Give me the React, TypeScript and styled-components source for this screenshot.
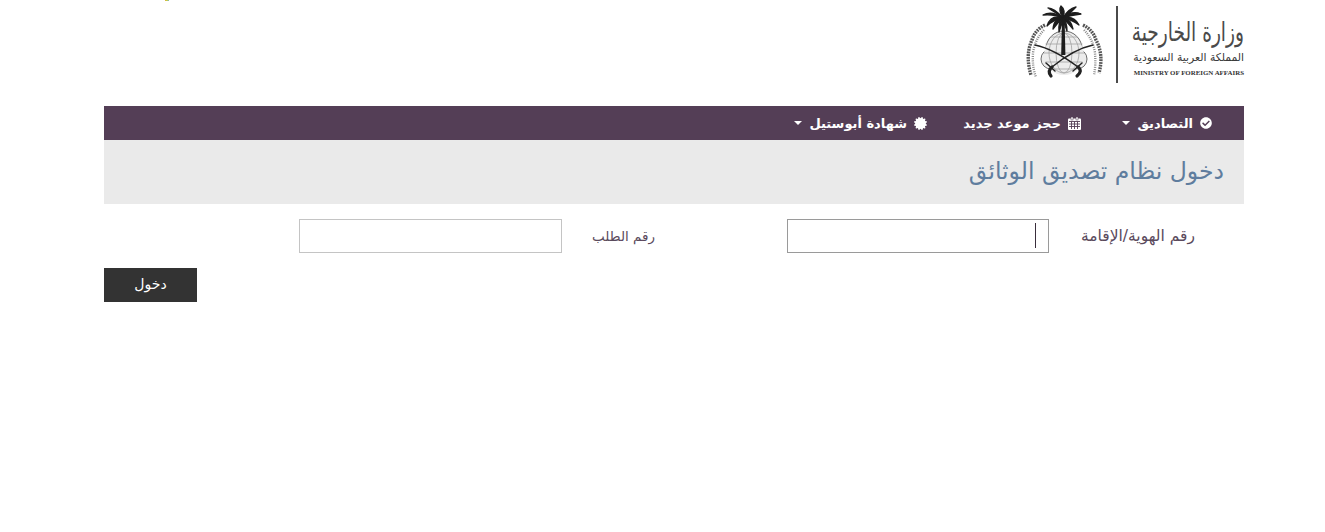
import React from "react";
import styled, { createGlobalStyle } from "styled-components";
import { FaCheckCircle, FaCertificate } from "react-icons/fa";

const Global = createGlobalStyle`
  html, body { margin: 0; padding: 0; background: #fff; }
  body { font-family: "DejaVu Sans", "Noto Sans", sans-serif; }
`;

const Page = styled.div`
  width: 1140px;
  margin-left: 104px;
  direction: rtl;
  position: relative;
`;

const Speck = styled.span`
  position: absolute;
  top: 0;
  left: 61px;
  width: 4px;
  height: 1px;
  background: linear-gradient(90deg, #e0b040, #c8d040, #70b0d0);
`;

const Header = styled.header`
  height: 106px;
  display: flex;
  align-items: flex-start;
`;

const LogoWrap = styled.div`
  display: flex;
  direction: ltr;
  align-items: stretch;
  height: 78px;
  margin-top: 5px;
`;

const Emblem = styled.svg`
  width: 80px;
  height: 78px;
  display: block;
`;

const Divider = styled.div`
  width: 2px;
  background: #4a4a4a;
  margin: 1px 14px 0 12px;
`;

const LogoText = styled.div`
  width: 112px;
  display: flex;
  flex-direction: column;
  align-items: flex-end;
  color: #333;
`;

const LogoTitle = styled.div`
  direction: rtl;
  font-size: 18.6px;
  line-height: 24px;
  height: 24px;
  margin-top: 15px;
  color: #4a4a4a;
  white-space: nowrap;
  transform: scaleY(1.45);
  transform-origin: center;
`;

const LogoSub = styled.div`
  direction: rtl;
  font-size: 10.8px;
  line-height: 12px;
  margin-top: 8px;
  white-space: nowrap;
  color: #3a3a3a;
`;

const LogoEn = styled.div`
  direction: ltr;
  font-family: "Liberation Serif", serif;
  font-weight: bold;
  font-size: 6.9px;
  line-height: 9px;
  margin-top: 4px;
  white-space: nowrap;
  color: #333;
`;

const Nav = styled.nav`
  height: 34px;
  background: #543e56;
  display: flex;
  align-items: center;
  padding-right: 32px;
`;

const NavItem = styled.a<{ $w: number }>`
  display: flex;
  align-items: center;
  gap: 7px;
  width: ${(p) => p.$w}px;
  color: #fff;
  font-size: 13px;
  font-weight: bold;
  white-space: nowrap;
  svg { flex: none; }
`;

const Caret = styled.span`
  width: 0;
  height: 0;
  border-top: 4px solid #fff;
  border-left: 4px solid transparent;
  border-right: 4px solid transparent;
`;

const CalendarIcon = styled.svg`
  width: 13px;
  height: 13px;
`;

const TitleBand = styled.div`
  height: 64px;
  background: #eaeaea;
  display: flex;
  align-items: center;
  padding: 0 20px 2px 0;
  box-sizing: border-box;
`;

const Title = styled.h1`
  margin: 0;
  font-size: 23.5px;
  font-weight: normal;
  color: #5f7d9e;
`;

const FormRow = styled.div`
  display: flex;
  align-items: center;
  margin-top: 15px;
  padding-right: 49px;
`;

const FieldLabel = styled.label<{ $w: number; $size: number }>`
  width: ${(p) => p.$w}px;
  font-size: ${(p) => p.$size}px;
  color: #5a4a5c;
  white-space: nowrap;
`;

const InputWrap = styled.div<{ $w: number; $gapAfter?: number }>`
  position: relative;
  width: ${(p) => p.$w}px;
  margin-left: ${(p) => p.$gapAfter ?? 0}px;
`;

const TextInput = styled.input<{ $focus?: boolean }>`
  display: block;
  box-sizing: border-box;
  width: 100%;
  height: 34px;
  border: 1px solid ${(p) => (p.$focus ? "#9a9a9a" : "#c4c4c4")};
  background: #fff;
  outline: none;
  padding: 0;
`;

const CaretLine = styled.span`
  position: absolute;
  top: 4px;
  right: 13px;
  width: 1px;
  height: 25px;
  background: #3a2e3c;
`;

const ButtonRow = styled.div`
  display: flex;
  justify-content: flex-end;
  margin-top: 15px;
`;

const Submit = styled.button`
  width: 93px;
  height: 34px;
  border: 0;
  background: #333;
  color: #fff;
  font-family: inherit;
  font-size: 14px;
  padding: 0 0 2px;
`;

const fronds = [
  "M39 13 Q30 3 24 3 Q31 7 39 13Z",
  "M39 13 Q28 5 19 10 Q30 9 39 13Z",
  "M39 13 Q27 9 23 21 Q30 14 39 13Z",
  "M39 13 Q30 13 29 24 Q34 17 39 13Z",
  "M39 13 Q34 16 35 27 Q38 19 39 13Z",
  "M39 13 Q34 5 37 1 Q42 5 39 13Z",
  "M39 13 Q44 4 52 2 Q47 8 39 13Z",
  "M39 13 Q48 5 57 9 Q47 10 39 13Z",
  "M39 13 Q50 10 55 20 Q47 14 39 13Z",
  "M39 13 Q47 14 49 24 Q43 17 39 13Z",
  "M39 13 Q43 17 43 26 Q40 19 39 13Z",
];

function EmblemArt() {
  return (
    <Emblem viewBox="0 0 80 78" aria-hidden="true">
      <g fill="none" stroke="#555" strokeWidth="3.4" strokeDasharray="1.8 0.9">
        <path d="M21 20 Q11 25 8 35 Q1 50 7 70" />
        <path d="M59 20 Q69 25 72 35 Q80 50 75 68" />
      </g>
      <g fill="none" stroke="#8c8c8c" strokeWidth="2.4" strokeDasharray="1 1.2">
        <path d="M20 25 Q11 34 9 48 Q8 62 12 72" />
        <path d="M60 25 Q69 34 71 48 Q72 60 70 70" />
      </g>
      <g fill="#ececec" stroke="#6a6a6a" strokeWidth="1">
        <circle cx="40" cy="44" r="18" />
        <circle cx="27" cy="54" r="10" />
        <circle cx="53" cy="54" r="10" />
        <circle cx="40" cy="50" r="20" stroke="none" />
      </g>
      <g fill="none" stroke="#a2a2a2" strokeWidth="0.8">
        <ellipse cx="40" cy="48" rx="8" ry="20" />
        <ellipse cx="40" cy="48" rx="15" ry="20" />
        <path d="M20 48H60M21.5 39H58.5M21.5 57H58.5M27 32H53M27 64H53" />
      </g>
      <path d="M38 13 H40.6 L41.4 50 H37.2Z" fill="#1d1d1d" />
      <g fill="#1d1d1d">
        {fronds.map((d) => (
          <path key={d} d={d} stroke="#1d1d1d" strokeWidth="1.3" strokeLinejoin="round" />
        ))}
      </g>
      <g fill="none" stroke="#222" strokeLinecap="round">
        <path d="M11 40 Q30 44 54 62" strokeWidth="1.5" />
        <path d="M69 40 Q50 44 28 62" strokeWidth="1.5" />
        <path d="M54 62 Q59 66 53 71" strokeWidth="3.2" />
        <path d="M28 62 Q23 66 27 71" strokeWidth="3.2" />
        <path d="M49 66 L58 58M31 66 L22 58" strokeWidth="1.5" />
      </g>
    </Emblem>
  );
}

function Calendar() {
  return (
    <CalendarIcon viewBox="0 0 13 13" aria-hidden="true">
      <rect x="0" y="1.5" width="13" height="11.5" rx="1" fill="#fff" />
      <rect x="3" y="0" width="2" height="3" fill="#fff" stroke="#543e56" strokeWidth="0.5" />
      <rect x="8" y="0" width="2" height="3" fill="#fff" stroke="#543e56" strokeWidth="0.5" />
      <path
        d="M1 4.5H12M1 7H12M1 9.5H12M3.5 4.5V12M6.5 4.5V12M9.5 4.5V12"
        stroke="#543e56"
        strokeWidth="0.9"
      />
    </CalendarIcon>
  );
}

export default function App() {
  return (
    <>
      <Global />
      <Page>
        <Speck />
        <Header>
          <LogoWrap>
            <EmblemArt />
            <Divider />
            <LogoText>
              <LogoTitle>وزارة الخارجية</LogoTitle>
              <LogoSub>المملكة العربية السعودية</LogoSub>
              <LogoEn>MINISTRY OF FOREIGN AFFAIRS</LogoEn>
            </LogoText>
          </LogoWrap>
        </Header>
        <Nav>
          <NavItem $w={131}><FaCheckCircle size={12} />التصاديق<Caret /></NavItem>
          <NavItem $w={154}><Calendar />حجز موعد جديد</NavItem>
          <NavItem $w={135}><FaCertificate size={13} />شهادة أبوستيل<Caret /></NavItem>
        </Nav>
        <TitleBand>
          <Title>دخول نظام تصديق الوثائق</Title>
        </TitleBand>
        <FormRow>
          <FieldLabel $w={146} $size={15.5}>رقم الهوية/الإقامة</FieldLabel>
          <InputWrap $w={262} $gapAfter={132}>
            <TextInput $focus />
            <CaretLine />
          </InputWrap>
          <FieldLabel $w={93} $size={13.5}>رقم الطلب</FieldLabel>
          <InputWrap $w={263}>
            <TextInput />
          </InputWrap>
        </FormRow>
        <ButtonRow>
          <Submit>دخول</Submit>
        </ButtonRow>
      </Page>
    </>
  );
}
